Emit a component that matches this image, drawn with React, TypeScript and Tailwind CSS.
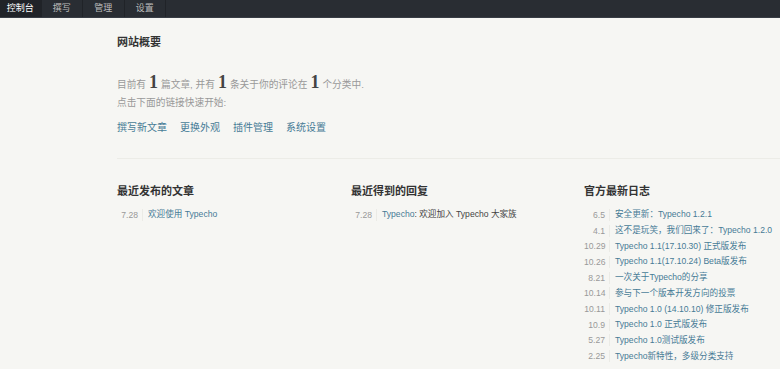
import React from 'react';

const navItems = ['控制台', '撰写', '管理', '设置'];
const quickLinks = ['撰写新文章', '更换外观', '插件管理', '系统设置'];

const posts = [{ date: '7.28', title: '欢迎使用 Typecho' }];

const logs = [
  { date: '6.5', title: '安全更新：Typecho 1.2.1' },
  { date: '4.1', title: '这不是玩笑，我们回来了：Typecho 1.2.0' },
  { date: '10.29', title: 'Typecho 1.1(17.10.30) 正式版发布' },
  { date: '10.26', title: 'Typecho 1.1(17.10.24) Beta版发布' },
  { date: '8.21', title: '一次关于Typecho的分享' },
  { date: '10.14', title: '参与下一个版本开发方向的投票' },
  { date: '10.11', title: 'Typecho 1.0 (14.10.10) 修正版发布' },
  { date: '10.9', title: 'Typecho 1.0 正式版发布' },
  { date: '5.27', title: 'Typecho 1.0测试版发布' },
  { date: '2.25', title: 'Typecho新特性，多级分类支持' },
];

function Row({ date, children }: { date: string; children: React.ReactNode }) {
  return (
    <li className="flex items-center h-[15.7px] text-[8.6px] whitespace-nowrap">
      <span className="w-[26px] text-right text-[#999] pr-[4px] border-r border-[#ebebe6] leading-[12px]">{date}</span>
      <span className="pl-[5px]">{children}</span>
    </li>
  );
}

const serif = { fontFamily: '"Liberation Serif", serif' };

export default function App() {
  return (
    <div
      className="min-h-[369px] bg-[#f6f6f3] overflow-hidden"
      style={{ fontFamily: '"Liberation Sans", "Noto Sans CJK SC", sans-serif' }}
    >
      <nav className="h-[18px] bg-[#292d33] flex border-b border-[#383d45]">
        {navItems.map((item, i) => (
          <a
            key={item}
            className={`w-[41.5px] h-full flex items-center justify-center text-[9px] border-r border-[#202328] ${
              i === 0 ? 'bg-[#202328] text-white' : 'text-[#bbb]'
            }`}
          >
            {item}
          </a>
        ))}
      </nav>

      <section className="pl-[117px]">
        <h2 className="pt-[17px] text-[11px] font-bold text-[#333] leading-[14px]">网站概要</h2>
        <p className="mt-[25px] text-[9.7px] text-[#999] leading-[16px] flex items-baseline whitespace-nowrap">
          目前有
          <em className="not-italic font-bold text-[18px] text-[#444] mx-[3px]" style={serif}>1</em>
          篇文章, 并有
          <em className="not-italic font-bold text-[18px] text-[#444] mx-[3px]" style={serif}>1</em>
          条关于你的评论在
          <em className="not-italic font-bold text-[18px] text-[#444] mx-[3px]" style={serif}>1</em>
          个分类中.
        </p>
        <p className="mt-[2px] text-[9.7px] text-[#999] leading-[16px]">点击下面的链接快速开始:</p>
        <div className="mt-[10px] flex gap-[13px] text-[10px] text-[#467b96] leading-[14px]">
          {quickLinks.map((l) => (
            <a key={l}>{l}</a>
          ))}
        </div>

        <div className="mt-[23px] border-t border-[#ececE7]" />

        <div className="mt-[25px] flex">
          <div className="w-[234px] shrink-0">
            <h3 className="text-[11px] font-bold text-[#333] leading-[14px] mb-[9px]">最近发布的文章</h3>
            <ul>
              {posts.map((p) => (
                <Row key={p.title} date={p.date}>
                  <a className="text-[#467b96]">{p.title}</a>
                </Row>
              ))}
            </ul>
          </div>
          <div className="w-[233px] shrink-0">
            <h3 className="text-[11px] font-bold text-[#333] leading-[14px] mb-[9px]">最近得到的回复</h3>
            <ul>
              <Row date="7.28">
                <a className="text-[#467b96]">Typecho</a>
                <span className="text-[#444]">: 欢迎加入 Typecho 大家族</span>
              </Row>
            </ul>
          </div>
          <div className="w-[196px] shrink-0">
            <h3 className="text-[11px] font-bold text-[#333] leading-[14px] mb-[9px]">官方最新日志</h3>
            <ul>
              {logs.map((p) => (
                <Row key={p.title} date={p.date}>
                  <a className="text-[#467b96]">{p.title}</a>
                </Row>
              ))}
            </ul>
          </div>
        </div>
      </section>
    </div>
  );
}
